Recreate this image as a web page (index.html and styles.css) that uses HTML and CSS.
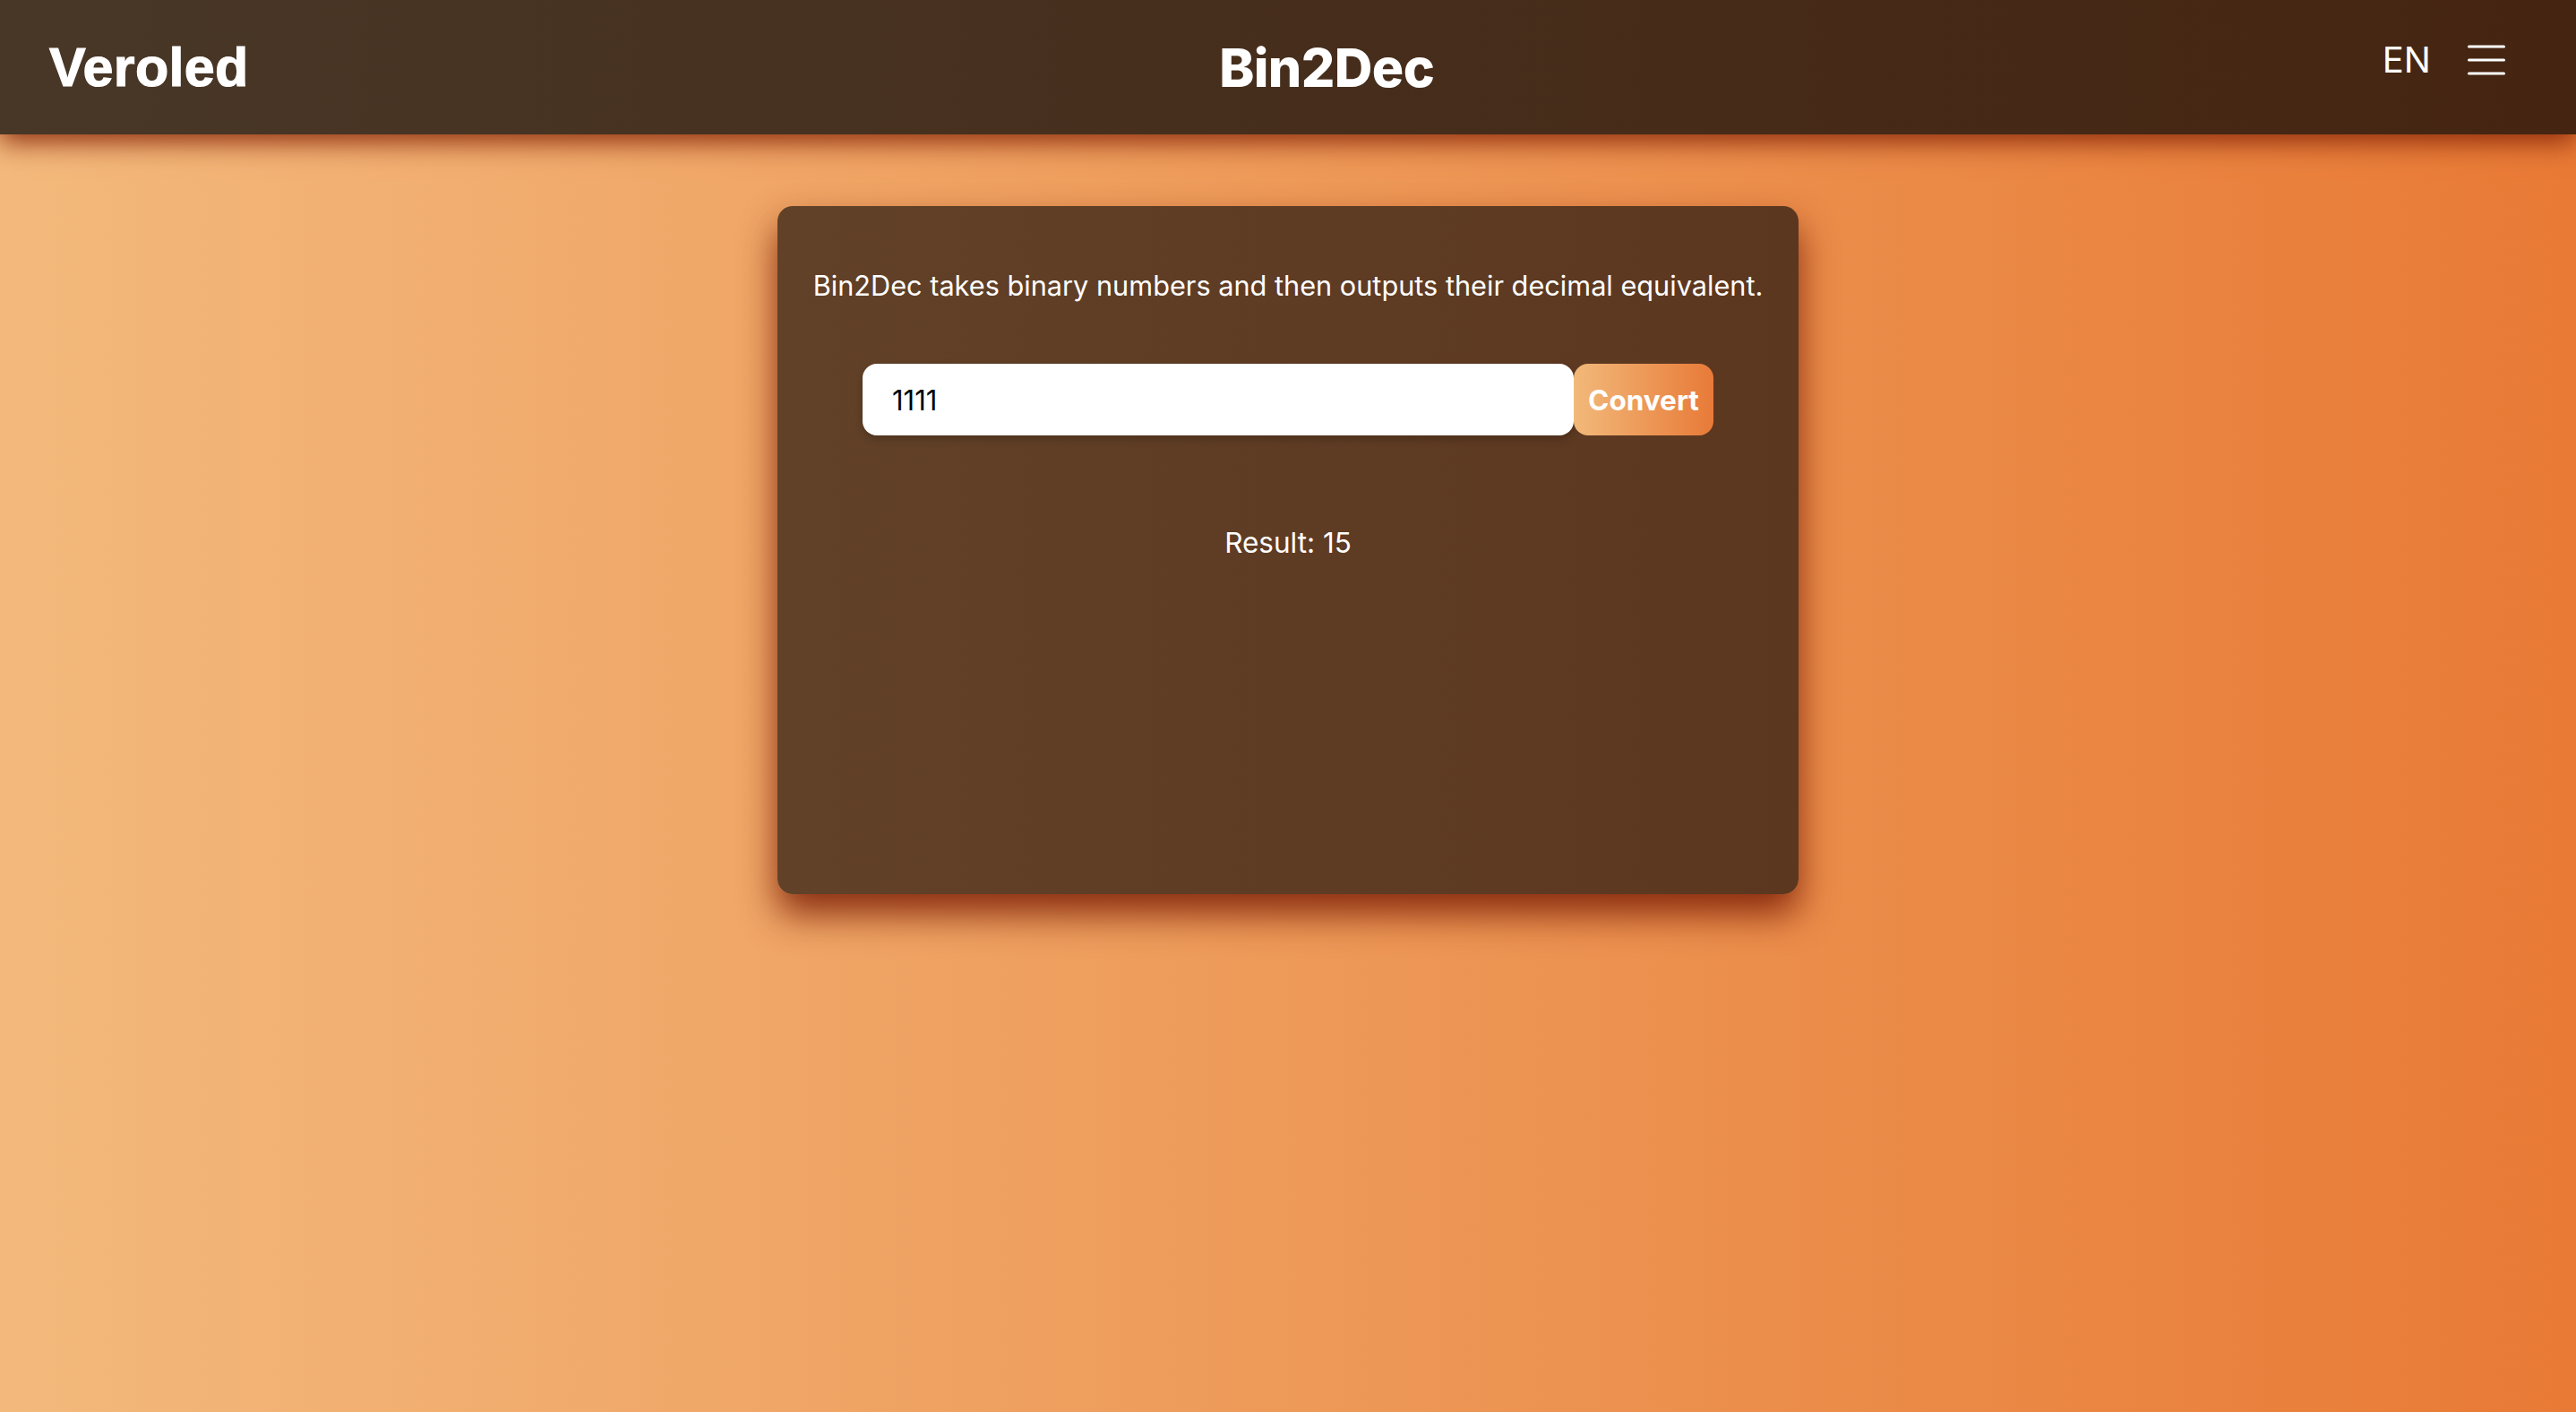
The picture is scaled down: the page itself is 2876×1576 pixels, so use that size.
FILE: index.html
```html
<!DOCTYPE html>
<html lang="en">
<head>
<meta charset="utf-8">
<title>Bin2Dec</title>
<link rel="stylesheet" href="styles.css">
</head>
<body>
<header class="topbar">
  <div class="brand">Veroled</div>
  <h1 class="title">Bin2Dec</h1>
  <div class="tools">
    <span class="lang">EN</span>
    <button class="menu" aria-label="Menu">
      <svg width="42" height="34" viewBox="0 0 42 34"><g stroke="#fff" stroke-width="3" stroke-linecap="round"><line x1="1.5" y1="2" x2="40.5" y2="2"/><line x1="1.5" y1="17" x2="40.5" y2="17"/><line x1="1.5" y1="32" x2="40.5" y2="32"/></g></svg>
    </button>
  </div>
</header>
<main class="main">
  <section class="card">
    <p class="intro">Bin2Dec takes binary numbers and then outputs their decimal equivalent.</p>
    <form class="row">
      <input class="field" type="text" value="1111" autofocus>
      <button class="convert" type="button">Convert</button>
    </form>
    <p class="result">Result: 15</p>
  </section>
</main>
</body>
</html>
```
FILE: styles.css
```css
html, body {
  margin: 0;
  height: 100%;
}
body {
  background: linear-gradient(to right, #f3b97c 0%, #e87a35 100%);
  font-family: Inter, "Noto Sans", sans-serif;
  color: #fff;
}
.topbar {
  position: relative;
  z-index: 2;
  height: 150px;
  box-sizing: border-box;
  padding: 0 55px;
  display: flex;
  align-items: center;
  justify-content: space-between;
  background: linear-gradient(to right, #483727, #452511);
  box-shadow: 0 8px 28px rgba(135, 38, 10, 0.95);
}
.brand {
  font-family: "Liberation Sans", Arial, sans-serif;
  font-weight: 700;
  font-size: 61px;
  line-height: 1;
  letter-spacing: 0.3px;
  -webkit-text-stroke: 1.2px #fff;
}
.title {
  margin: 0 0 0 25px;
  font-family: Inter, sans-serif;
  font-weight: 800;
  font-size: 59px;
  line-height: 1;
  letter-spacing: -0.6px;
}
.tools {
  display: flex;
  align-items: center;
  gap: 41px;
  padding: 0 24px 16px 0;
}
.lang {
  font-size: 40px;
  line-height: 1;
  font-weight: 400;
}
.menu {
  display: block;
  padding: 0;
  border: 0;
  background: none;
  width: 42px;
  height: 34px;
}
.menu svg {
  display: block;
}
.main {
  display: flex;
  justify-content: center;
  padding-top: 80px;
}
.card {
  width: 1140px;
  height: 768px;
  box-sizing: border-box;
  padding: 71px 30px 40px;
  border-radius: 17px;
  background: linear-gradient(to right, #614128, #5c371f);
  box-shadow: 0 22px 40px rgba(125, 32, 8, 0.9);
  display: flex;
  flex-direction: column;
  align-items: center;
}
.intro {
  margin: 0;
  font-size: 30.7px;
  line-height: 36px;
  white-space: nowrap;
}
.row {
  margin: 69px 0 0;
  display: flex;
}
.field {
  width: 794px;
  height: 80px;
  box-sizing: border-box;
  padding: 0 33px;
  border: 0;
  border-radius: 16px;
  background: #fff;
  color: #000;
  font-family: Inter, sans-serif;
  font-size: 31px;
  outline: none;
  caret-color: #000;
  box-shadow: 0 4px 10px rgba(0, 0, 0, 0.2);
}
.convert {
  width: 156px;
  height: 80px;
  border: 0;
  border-radius: 16px;
  background: linear-gradient(to right, #f2b97a, #e87a38);
  color: #fff;
  font-family: Inter, sans-serif;
  font-weight: 700;
  font-size: 31.5px;
  padding: 0;
}
.result {
  margin: 102px 0 0;
  font-size: 31.5px;
  line-height: 36px;
}
```
